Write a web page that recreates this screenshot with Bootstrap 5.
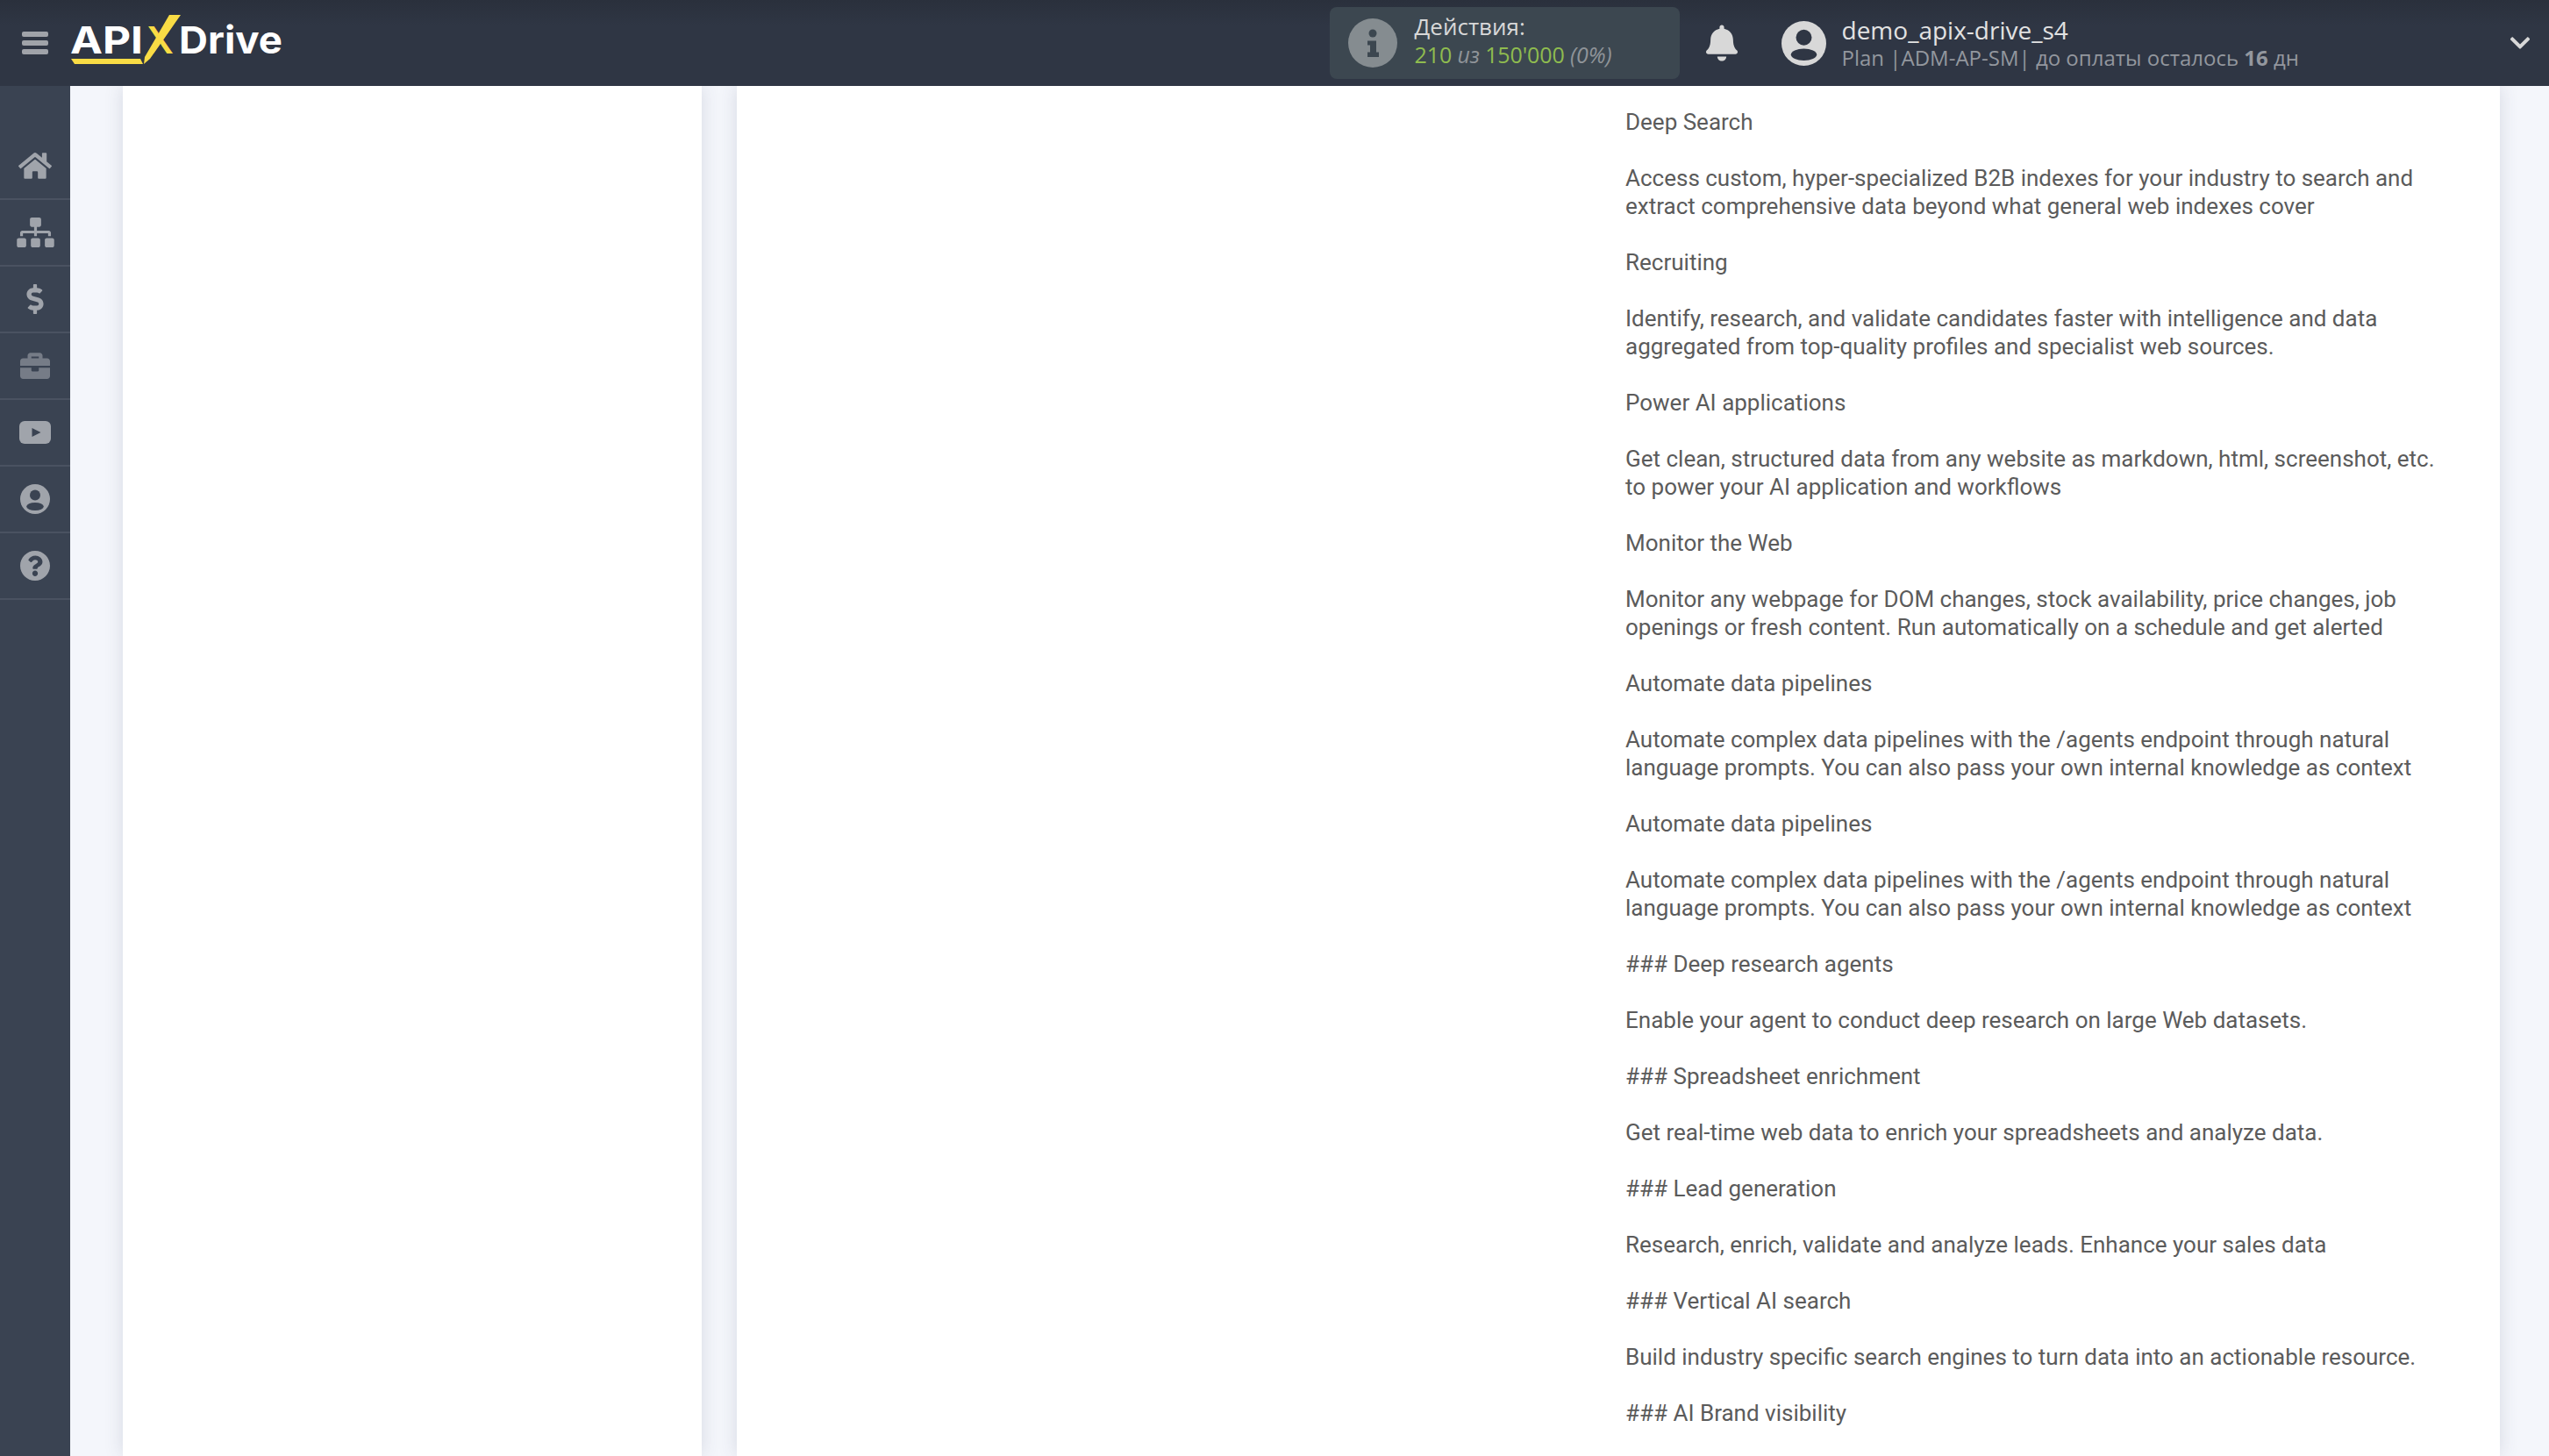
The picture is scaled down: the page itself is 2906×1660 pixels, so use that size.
<!DOCTYPE html>
<html lang="ru">
<head>
  <meta charset="UTF-8" />
  <title>ApiX-Drive</title>
  <link href="https://cdn.jsdelivr.net/npm/bootstrap@5.3.0/dist/css/bootstrap.min.css" rel="stylesheet" />
  <style>
    html, body { height: 100%; }
    body { background: #f4f6fb; font-family: "Roboto", sans-serif; overflow: hidden; }
    .top-bar { height: 98px; background: linear-gradient(180deg, #2a303c 0, #2f3644 30%, #2f3644 100%); font-family: "Open Sans", sans-serif; }
    .burger { width: 30px; margin-left: 25px; }
    .burger i { display: block; height: 6px; border-radius: 2px; background: #a0a3a9; }
    .logo-svg { margin-left: 26px; overflow: visible; }
    .logo-word { font-family: "Inter", sans-serif; font-weight: 700; font-size: 43px; fill: #fff; }
    .logo-x { font-family: "Inter", sans-serif; font-weight: 600; font-size: 43px; fill: #f9dc45; }
    .stat-box { width: 399px; height: 82px; margin-right: 30px; background: #3c4750; border-radius: 8px; padding-left: 21px; gap: 20px; }
    .stat-copy { padding-bottom: 6px; }
    .stat-title { font-size: 26px; line-height: 32px; color: #d8d8d8; }
    .stat-line { font-size: 25px; line-height: 33px; color: #8fbc4f; letter-spacing: -.1px; }
    .stat-line em { color: #8f9499; }
    .user-icon { margin-left: 50px; }
    .user-name { font-size: 28px; line-height: 34px; color: #e2e2e2; }
    .user-plan { font-size: 24px; line-height: 30px; color: #93979e; }
    .user-block { margin-left: 18px; }
    .chevron { margin-left: 239px; margin-right: 20px; }
    .side-bar { width: 80px; flex: 0 0 80px; background: #3a4352; padding-top: 54px; }
    .side-item { height: 76px; border-bottom: 2px solid #4a5261; }
    .main-area { padding: 0 56px 0 60px; gap: 40px; }
    .pane { background: #fff; box-shadow: 0 0 20px rgba(60, 70, 100, .16); }
    .pane-left { width: 660px; flex: 0 0 660px; }
    .pane-right { width: 2010px; flex: 0 0 2010px; padding: 25px 0 0 1013px; }
    .copy-text { width: 947px; font-size: 26px; line-height: 32px; color: #5b5b5b; }
    .copy-text p { margin: 0 0 32px; }
  </style>
</head>
<body>
  <div class="d-flex flex-column vh-100">
    <header class="top-bar d-flex align-items-center flex-shrink-0">
      <div class="burger d-flex flex-column gap-1"><i></i><i></i><i></i></div>
      <svg class="logo-svg" width="250" height="62" viewBox="0 0 250 62">
        <text class="logo-word" x="-1" y="43" textLength="83" lengthAdjust="spacingAndGlyphs">API</text>
        <text class="logo-x" x="86" y="43" textLength="31" lengthAdjust="spacingAndGlyphs">X</text>
        <polygon fill="#f9dc45" points="112,-1 125,-1 90,49 83,55 84,47" />
        <polygon fill="#f9dc45" points="0,49 79,49 82,55 4,55" />
        <text class="logo-word" x="123" y="43" textLength="118" lengthAdjust="spacingAndGlyphs">Drive</text>
      </svg>
      <div class="ms-auto d-flex align-items-center">
        <div class="stat-box d-flex align-items-center">
          <svg width="56" height="56" viewBox="0 0 56 56"><circle cx="28" cy="28" r="28" fill="#858c90"/><circle cx="28" cy="17" r="4.500" fill="#3c4750"/><path d="M22 25.500h10v13h3v5.500H22v-5.500h3v-8h-3z" fill="#3c4750"/></svg>
          <div class="stat-copy">
            <div class="stat-title">Действия:</div>
            <div class="stat-line">210 <em>из</em> 150'000 <em>(0%)</em></div>
          </div>
        </div>
        <svg width="36" height="42" viewBox="0 0 448 512"><path fill="#d8d8d8" d="M224 512c35.300 0 64-28.700 64-64H160c0 35.300 28.700 64 64 64zm215.400-149.700c-19.300-20.800-55.500-52-55.500-154.300 0-77.700-54.500-139.900-128-155.200V32c0-17.700-14.300-32-32-32s-32 14.300-32 32v20.800C118.400 68.100 64 130.300 64 208c0 102.300-36.200 133.500-55.500 154.300-6 6.400-8.600 14.100-8.500 21.700.1 16.400 13 32 32.100 32h383.800c19.100 0 32-15.600 32.100-32 .1-7.600-2.500-15.300-8.600-21.700z"/></svg>
        <svg class="user-icon" width="51" height="51" viewBox="0 0 34 34"><circle cx="17" cy="17" r="17" fill="#d8d8d8"/><circle cx="17" cy="12.500" r="6" fill="#2f3644"/><ellipse cx="17" cy="25.500" rx="9.800" ry="4.500" fill="#2f3644"/></svg>
        <div class="user-block">
          <div class="user-name">demo_apix-drive_s4</div>
          <div class="user-plan">Plan |ADM-AP-SM| до оплаты осталось <b>16</b> дн</div>
        </div>
      </div>
      <svg class="chevron" width="26" height="26" viewBox="0 0 448 512"><path fill="#d8d8d8" d="M207 381.500L12.700 187.100c-9.400-9.400-9.400-24.600 0-33.900l22.700-22.700c9.400-9.400 24.500-9.400 33.900 0L224 284.500l154.700-154c9.400-9.300 24.500-9.300 33.900 0l22.700 22.700c9.400 9.400 9.400 24.600 0 33.900L241 381.500c-9.400 9.400-24.600 9.400-34 0z"/></svg>
    </header>
    <div class="d-flex flex-grow-1 overflow-hidden">
      <nav class="side-bar">
        <div class="side-item d-flex align-items-center justify-content-center"><svg width="38" height="34" viewBox="0 0 576 512"><path fill="#a0a4ab" d="M280.370 148.260L96 300.110V464a16 16 0 0 0 16 16l112.060-.29a16 16 0 0 0 15.920-16V368a16 16 0 0 1 16-16h64a16 16 0 0 1 16 16v95.640a16 16 0 0 0 16 16.050L464 480a16 16 0 0 0 16-16V300L295.670 148.260a12.190 12.190 0 0 0-15.300 0zM571.600 251.470L488 182.560V44.050a12 12 0 0 0-12-12h-56a12 12 0 0 0-12 12v72.610L318.470 43a48 48 0 0 0-61 0L4.340 251.470a12 12 0 0 0-1.600 16.900l25.500 31A12 12 0 0 0 45.150 301l235.220-193.740a12.190 12.190 0 0 1 15.300 0L530.900 301a12 12 0 0 0 16.900-1.600l25.500-31a12 12 0 0 0-1.700-16.930z"/></svg></div>
        <div class="side-item d-flex align-items-center justify-content-center"><svg width="43" height="34" viewBox="0 0 640 512"><path fill="#a0a4ab" d="M128 352H32c-17.670 0-32 14.330-32 32v96c0 17.670 14.330 32 32 32h96c17.670 0 32-14.330 32-32v-96c0-17.670-14.330-32-32-32zm-24-80h192v48h48v-48h192v48h48v-57.590c0-21.170-17.230-38.410-38.410-38.410H344v-64h40c17.670 0 32-14.330 32-32V32c0-17.670-14.330-32-32-32H256c-17.670 0-32 14.330-32 32v96c0 17.670 14.330 32 32 32h40v64H94.410C73.230 224 56 241.230 56 262.410V320h48v-48zm264 80h-96c-17.670 0-32 14.330-32 32v96c0 17.670 14.330 32 32 32h96c17.670 0 32-14.330 32-32v-96c0-17.670-14.330-32-32-32zm240 0h-96c-17.670 0-32 14.330-32 32v96c0 17.670 14.330 32 32 32h96c17.670 0 32-14.330 32-32v-96c0-17.670-14.330-32-32-32z"/></svg></div>
        <div class="side-item d-flex align-items-center justify-content-center"><svg width="20" height="34" viewBox="0 0 288 512"><path fill="#a0a4ab" d="M209.200 233.400l-108-31.600C88.700 198.200 80 186.500 80 173.500c0-16.300 13.200-29.500 29.500-29.500h66.300c12.200 0 24.200 3.700 34.200 10.500 6.100 4.100 14.300 3.100 19.500-2l34.800-34c7.100-6.900 6.100-18.400-1.800-24.500C238 74.800 207.400 64.100 176 64V16c0-8.800-7.200-16-16-16h-32c-8.800 0-16 7.200-16 16v48h-2.500C45.800 64-5.400 118.700.5 183.600c4.200 46.100 39.400 83.600 83.800 96.600l102.500 30c12.500 3.700 21.200 15.300 21.200 28.300 0 16.300-13.200 29.500-29.500 29.500h-66.300C100 368 88 364.300 78 357.500c-6.100-4.100-14.300-3.100-19.500 2l-34.800 34c-7.100 6.900-6.100 18.400 1.800 24.500 24.500 19.200 55.100 29.900 86.500 30v48c0 8.800 7.200 16 16 16h32c8.800 0 16-7.200 16-16v-48.200c46.600-.9 90.300-28.600 105.700-72.700 21.500-61.600-14.600-124.800-72.500-141.700z"/></svg></div>
        <div class="side-item d-flex align-items-center justify-content-center"><svg width="34" height="34" viewBox="0 0 512 512"><path fill="#767c87" d="M320 336c0 8.840-7.160 16-16 16h-96c-8.840 0-16-7.160-16-16v-48H0v144c0 25.600 22.400 48 48 48h416c25.600 0 48-22.400 48-48V288H320v48zm144-208h-80V80c0-25.600-22.400-48-48-48H176c-25.600 0-48 22.400-48 48v48H48c-25.600 0-48 22.400-48 48v80h512v-80c0-25.600-22.400-48-48-48zm-144 0H192V96h128v32z"/></svg></div>
        <div class="side-item d-flex align-items-center justify-content-center"><svg width="36" height="26" viewBox="0 0 36 26"><rect width="36" height="26" rx="6" fill="#a0a4ab"/><path d="M14.500 8l10 5-10 5z" fill="#3a4352"/></svg></div>
        <div class="side-item d-flex align-items-center justify-content-center"><svg width="34" height="34" viewBox="0 0 34 34"><circle cx="17" cy="17" r="17" fill="#a0a4ab"/><circle cx="17" cy="12.500" r="6" fill="#3a4352"/><ellipse cx="17" cy="25.500" rx="9.800" ry="4.500" fill="#3a4352"/></svg></div>
        <div class="side-item d-flex align-items-center justify-content-center"><svg width="34" height="34" viewBox="8 8 496 496"><path fill="#a0a4ab" d="M504 256c0 136.997-111.043 248-248 248S8 392.997 8 256C8 119.083 119.043 8 256 8s248 111.083 248 248zM262.655 90c-54.497 0-89.255 22.957-116.549 63.758-3.536 5.286-2.353 12.415 2.715 16.258l34.699 26.310c5.205 3.947 12.621 3.008 16.665-2.122 17.864-22.658 30.113-35.797 57.303-35.797 20.429 0 45.698 13.148 45.698 32.958 0 14.976-12.363 22.667-32.534 33.976C247.128 238.528 216 254.941 216 296v4c0 6.627 5.373 12 12 12h56c6.627 0 12-5.373 12-12v-1.333c0-28.462 83.186-29.647 83.186-106.667 0-58.002-60.165-102-116.531-102zM256 338c-25.365 0-46 20.635-46 46 0 25.364 20.635 46 46 46s46-20.636 46-46c0-25.365-20.635-46-46-46z"/></svg></div>
      </nav>
      <main class="main-area d-flex flex-grow-1">
        <section class="pane pane-left"></section>
        <section class="pane pane-right">
          <div class="copy-text">
            <p>Deep Search</p>
            <p>Access custom, hyper-specialized B2B indexes for your industry to search and extract comprehensive data beyond what general web indexes cover</p>
            <p>Recruiting</p>
            <p>Identify, research, and validate candidates faster with intelligence and data aggregated from top-quality profiles and specialist web sources.</p>
            <p>Power AI applications</p>
            <p>Get clean, structured data from any website as markdown, html, screenshot, etc. to power your AI application and workflows</p>
            <p>Monitor the Web</p>
            <p>Monitor any webpage for DOM changes, stock availability, price changes, job openings or fresh content. Run automatically on a schedule and get alerted</p>
            <p>Automate data pipelines</p>
            <p>Automate complex data pipelines with the /agents endpoint through natural language prompts. You can also pass your own internal knowledge as context</p>
            <p>Automate data pipelines</p>
            <p>Automate complex data pipelines with the /agents endpoint through natural language prompts. You can also pass your own internal knowledge as context</p>
            <p>### Deep research agents</p>
            <p>Enable your agent to conduct deep research on large Web datasets.</p>
            <p>### Spreadsheet enrichment</p>
            <p>Get real-time web data to enrich your spreadsheets and analyze data.</p>
            <p>### Lead generation</p>
            <p>Research, enrich, validate and analyze leads. Enhance your sales data</p>
            <p>### Vertical AI search</p>
            <p>Build industry specific search engines to turn data into an actionable resource.</p>
            <p>### AI Brand visibility</p>
          </div>
        </section>
      </main>
    </div>
  </div>
  <script src="https://cdn.jsdelivr.net/npm/bootstrap@5.3.0/dist/js/bootstrap.bundle.min.js"></script>
</body>
</html>
